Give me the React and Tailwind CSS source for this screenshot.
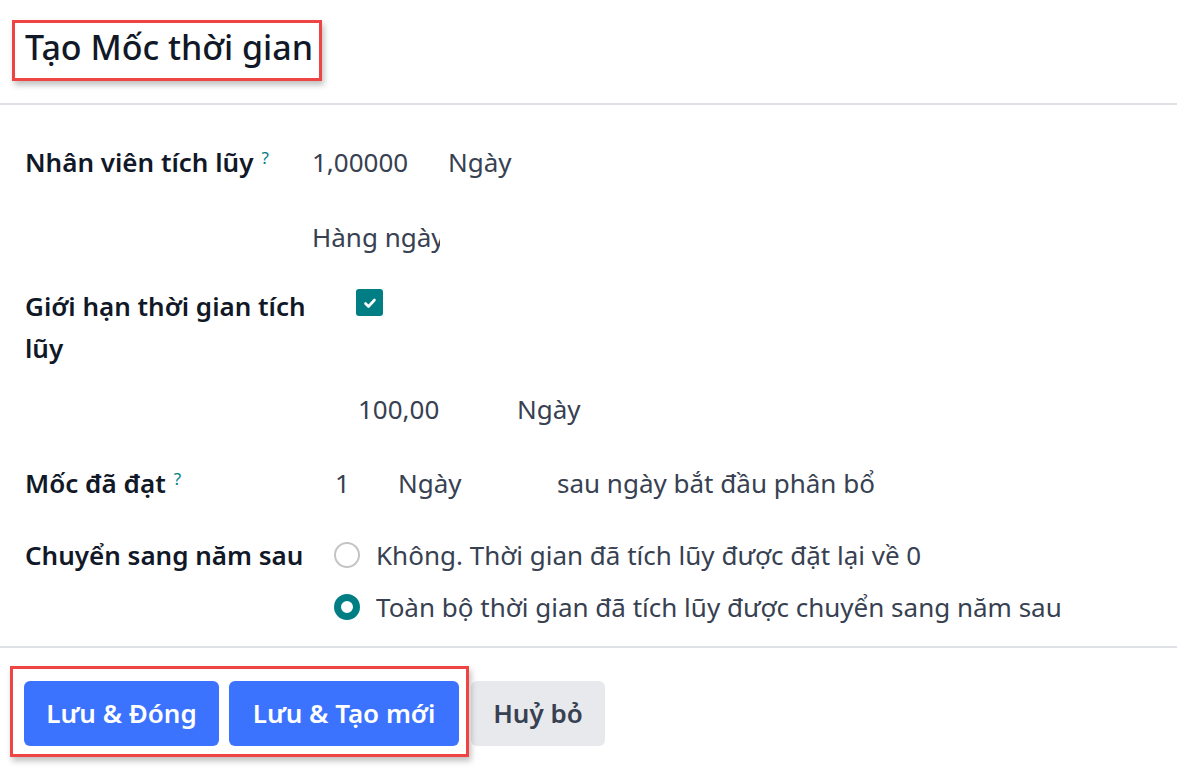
import React from 'react';

const Help = () => <sup className="text-[#017e84] text-[17px] ml-2 relative -top-2 font-normal">?</sup>;

const Radio = ({ on }) => (
  <span className={`inline-block w-[26px] h-[26px] rounded-full shrink-0 ${on ? 'border-[7px] border-[#017e84] bg-white' : 'border-2 border-[#c4c4c4] bg-white'}`} />
);

export default function App() {
  return (
    <div className="w-[1177px] h-[770px] bg-white flex flex-col overflow-hidden text-[#374151]" style={{ fontFamily: '"Noto Sans", "Open Sans", sans-serif' }}>
      {/* header */}
      <div className="h-[105px] shrink-0 border-b-2 border-[#dee2e6] relative flex items-center px-[25px]">
        <h1 className="text-[34px] font-medium text-[#111827] -mt-[9px]">Tạo Mốc thời gian</h1>
        <div className="absolute left-[12px] top-[20px] w-[310px] h-[61px] border-[3px] border-[#ef4444] shadow-[2px_4px_6px_rgba(0,0,0,0.25)]" />
      </div>

      {/* body */}
      <div className="flex-1 overflow-hidden px-[25px] text-[26px]">
        <div className="flex mt-[35px] h-[44px] items-center">
          <div className="w-[287px] font-semibold text-[#111827] whitespace-nowrap">Nhân viên tích lũy<Help /></div>
          <div className="w-[136px]">1,00000</div>
          <div>Ngày</div>
        </div>
        <div className="flex mt-[31px] h-[44px] items-center">
          <div className="w-[287px]" />
          <div className="w-[128px] overflow-hidden whitespace-nowrap">Hàng ngày</div>
        </div>
        <div className="flex mt-[26px]">
          <div className="w-[287px] font-semibold text-[#111827] leading-[42px]">Giới hạn thời gian tích lũy</div>
          <div className="ml-[44px] mt-[4px] w-[27px] h-[27px] bg-[#017e84] rounded-[3px] flex items-center justify-center">
            <svg width="16" height="16" viewBox="0 0 16 16"><path d="M3.5 8.5l3 3 6-6.5" fill="none" stroke="white" strokeWidth="2.6" strokeLinecap="round" strokeLinejoin="round" /></svg>
          </div>
        </div>
        <div className="flex mt-[18px] h-[44px] items-center">
          <div className="w-[333px]" />
          <div className="w-[159px]">100,00</div>
          <div>Ngày</div>
        </div>
        <div className="flex mt-[30px] h-[44px] items-center">
          <div className="w-[310px] font-semibold text-[#111827]">Mốc đã đạt<Help /></div>
          <div className="w-[63px]">1</div>
          <div className="w-[159px]">Ngày</div>
          <div>sau ngày bắt đầu phân bổ</div>
        </div>
        <div className="flex mt-[28px]">
          <div className="w-[309px] font-semibold text-[#111827] leading-[44px] whitespace-nowrap">Chuyển sang năm sau</div>
          <div className="flex flex-col gap-[8px]">
            <div className="flex items-center gap-[16px] h-[44px]"><Radio /><span>Không. Thời gian đã tích lũy được đặt lại về 0</span></div>
            <div className="flex items-center gap-[16px] h-[44px]"><Radio on /><span>Toàn bộ thời gian đã tích lũy được chuyển sang năm sau</span></div>
            <div className="flex items-center gap-[16px] h-[44px]"><Radio /></div>
          </div>
        </div>
      </div>

      {/* footer */}
      <div className="h-[124px] shrink-0 border-t-2 border-[#dee2e6] relative flex items-start pt-[33px] px-[24px] gap-[10px]">
        <button className="h-[65px] w-[195px] rounded-[6px] bg-[#3b73ff] text-white font-semibold text-[26px]">Lưu &amp; Đóng</button>
        <button className="h-[65px] w-[230px] rounded-[6px] bg-[#3b73ff] text-white font-semibold text-[26px]">Lưu &amp; Tạo mới</button>
        <button className="h-[65px] w-[134px] ml-[2px] rounded-[6px] bg-[#e7e9ed] text-[#374151] font-semibold text-[26px]">Huỷ bỏ</button>
        <div className="absolute left-[10px] top-[18px] w-[459px] h-[91px] border-[3px] border-[#ef4444] shadow-[2px_4px_6px_rgba(0,0,0,0.25)]" />
      </div>
    </div>
  );
}
